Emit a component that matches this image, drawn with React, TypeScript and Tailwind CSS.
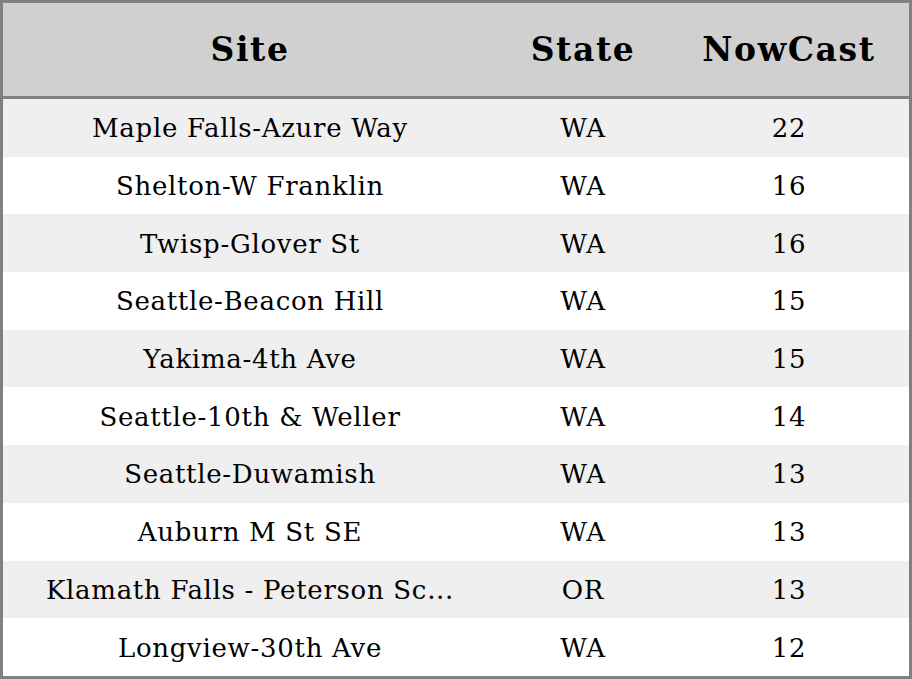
import React from "react";

const rows: [string, string, string][] = [
  ["Maple Falls-Azure Way", "WA", "22"],
  ["Shelton-W Franklin", "WA", "16"],
  ["Twisp-Glover St", "WA", "16"],
  ["Seattle-Beacon Hill", "WA", "15"],
  ["Yakima-4th Ave", "WA", "15"],
  ["Seattle-10th & Weller", "WA", "14"],
  ["Seattle-Duwamish", "WA", "13"],
  ["Auburn M St SE", "WA", "13"],
  ["Klamath Falls - Peterson Sc...", "OR", "13"],
  ["Longview-30th Ave", "WA", "12"],
];

export default function App() {
  return (
    <div
      className="w-[912px] h-[679px] border-[3px] border-[#808080] bg-white text-black overflow-hidden flex flex-col"
      style={{ fontFamily: '"DejaVu Serif", serif' }}
    >
      <div className="h-[96px] shrink-0 bg-[#d0d0d0] border-b-[3px] border-[#808080] grid grid-cols-[494px_172px_1fr] items-center text-[33px] tracking-[1.6px] font-bold">
        <div className="text-center">Site</div>
        <div className="text-center">State</div>
        <div className="text-center">NowCast</div>
      </div>
      {rows.map((r, i) => (
        <div
          key={i}
          className={`h-[57.7px] shrink-0 grid grid-cols-[494px_172px_1fr] items-center text-[26px] tracking-[0.7px] pt-[2px] ${
            i % 2 === 0 ? "bg-[#efefef]" : "bg-white"
          }`}
        >
          <div className="text-center whitespace-nowrap">{r[0]}</div>
          <div className="text-center">{r[1]}</div>
          <div className="text-center">{r[2]}</div>
        </div>
      ))}
    </div>
  );
}
